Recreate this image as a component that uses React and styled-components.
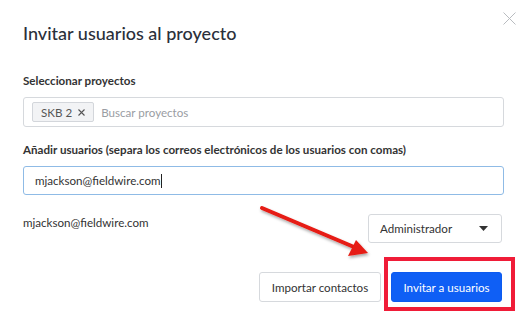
import React from "react";
import styled, { createGlobalStyle } from "styled-components";

const Global = createGlobalStyle`
  html, body { margin: 0; padding: 0; background: #fff; }
  body { font-family: Lato, "Noto Sans", sans-serif; color: #333; }
  * { box-sizing: border-box; }
`;

const Modal = styled.div`
  position: relative;
  width: 525px;
  height: 323px;
  padding: 22px 21px 0 23px;
  display: flex;
  flex-direction: column;
  background: #fff;
  overflow: hidden;
`;

const Close = styled.svg`
  position: absolute;
  top: 12px;
  right: 9px;
`;

const Title = styled.h1`
  margin: 0;
  font-size: 18px;
  line-height: 22px;
  font-weight: 500;
  color: #2b303a;
`;

const Label = styled.label`
  display: block;
  margin-top: ${(p) => p.$mt}px;
  font-size: 11.6px;
  line-height: 14px;
  font-weight: 700;
  color: #333;
`;

const InputBox = styled.div`
  margin-top: ${(p) => p.$mt}px;
  height: ${(p) => p.$h}px;
  border: 1px solid ${(p) => (p.$focused ? "#8fbbe6" : "#d6d9dd")};
  border-radius: 3px;
  display: flex;
  align-items: center;
  gap: 7px;
  padding: 0 ${(p) => (p.$focused ? 11 : 8)}px;
  font-size: 11.6px;
  color: #333;
`;

const Chip = styled.span`
  display: inline-flex;
  align-items: center;
  gap: 6px;
  height: 20px;
  padding: 0 8px;
  background: #f2f3f5;
  border: 1px solid #d3d6db;
  border-radius: 2px;
  font-size: 11.6px;
  color: #555;
`;

const Placeholder = styled.span`
  color: #9a9da3;
  font-size: 11.6px;
`;

const Caret = styled.span`
  display: inline-block;
  width: 1px;
  height: 14px;
  background: #222;
  margin-left: -7px;
`;

const Row = styled.div`
  margin-top: ${(p) => p.$mt}px;
  margin-right: 2px;
  display: flex;
  align-items: flex-start;
  justify-content: ${(p) => p.$justify || "space-between"};
  gap: ${(p) => p.$gap || 0}px;
`;

const RowText = styled.span`
  font-size: 11.6px;
  line-height: 17px;
  color: #333;
`;

const Select = styled.div`
  width: 134px;
  height: 29px;
  border: 1px solid #d6d9dd;
  border-radius: 3px;
  display: flex;
  align-items: center;
  justify-content: space-between;
  padding: 0 13px 0 11px;
  font-size: 11.6px;
  color: #333;
`;

const Button = styled.button`
  height: 30px;
  padding: 0;
  border-radius: 3px;
  font-family: Lato, "Noto Sans", sans-serif;
  font-size: 11.6px;
  white-space: nowrap;
  border: 1px solid ${(p) => (p.$primary ? "#0c5bf0" : "#d6d9dd")};
  background: ${(p) => (p.$primary ? "#0f5ff5" : "#fff")};
  color: ${(p) => (p.$primary ? "#fff" : "#333")};
  width: ${(p) => p.$w}px;
  cursor: pointer;
`;

const Highlight = styled.div`
  position: absolute;
  left: 384px;
  top: 257px;
  width: 131px;
  height: 54px;
  border: 4px solid #f01c38;
  pointer-events: none;
`;

const Arrow = styled.svg`
  position: absolute;
  left: 250px;
  top: 195px;
  overflow: visible;
  pointer-events: none;
`;

export default function App() {
  return (
    <>
      <Global />
      <Modal>
        <Close width="13" height="13" viewBox="0 0 13 13">
          <path d="M0.5 0.5 L12.5 12.5 M12.5 0.5 L0.5 12.5" stroke="#b9bcc0" strokeWidth="1" fill="none" />
        </Close>
        <Title>Invitar usuarios al proyecto</Title>

        <Label $mt={30}>Seleccionar proyectos</Label>
        <InputBox $mt={9} $h={30}>
          <Chip>
            SKB 2
            <svg width="7" height="7" viewBox="0 0 7 7">
              <path d="M0.5 0.5 L6.5 6.5 M6.5 0.5 L0.5 6.5" stroke="#555" strokeWidth="1.1" fill="none" />
            </svg>
          </Chip>
          <Placeholder>Buscar proyectos</Placeholder>
        </InputBox>

        <Label $mt={16}>
          Añadir usuarios (separa los correos electrónicos de los usuarios con comas)
        </Label>
        <InputBox $mt={9} $h={29} $focused>
          mjackson@fieldwire.com
          <Caret />
        </InputBox>

        <Row $mt={19}>
          <RowText>mjackson@fieldwire.com</RowText>
          <Select>
            Administrador
            <svg width="9" height="5" viewBox="0 0 9 5">
              <path d="M0 0 L9 0 L4.5 5 Z" fill="#333" />
            </svg>
          </Select>
        </Row>

        <Row $mt={29} $justify="flex-end" $gap={10}>
          <Button $w={122}>Importar contactos</Button>
          <Button $primary $w={111}>Invitar a usuarios</Button>
        </Row>

        <Arrow width="130" height="70" viewBox="0 0 130 70">
          <defs>
            <filter id="sh" x="-20%" y="-40%" width="140%" height="180%">
              <feDropShadow dx="1" dy="2" stdDeviation="1.5" floodColor="#000" floodOpacity="0.35" />
            </filter>
          </defs>
          <g filter="url(#sh)">
            <line x1="12" y1="13" x2="104" y2="52" stroke="#e61a12" strokeWidth="4" strokeLinecap="round" />
            <polygon points="118,58 98,61 106,45" fill="#e61a12" />
          </g>
        </Arrow>
        <Highlight />
      </Modal>
    </>
  );
}
